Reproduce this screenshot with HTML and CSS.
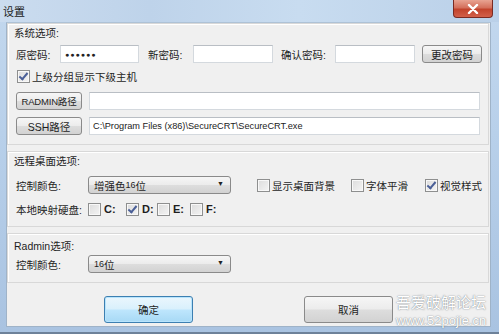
FILE: index.html
```html
<!DOCTYPE html>
<html lang="zh-CN">
<head>
    <meta charset="UTF-8">
    <title>设置</title>
    <link rel="stylesheet" href="styles.css">
</head>
<body>
    <div class="window">
        <div class="titlebar">
            <span class="title">设置</span>
            <button class="close">
                <svg width="12" height="10" viewBox="0 0 12 10"><path d="M2 1 L10 9 M10 1 L2 9" stroke="#fff" stroke-width="2.4" stroke-linecap="round"/></svg>
            </button>
        </div>
        <div class="client">
            <div class="panel sys">
                <div class="caption">系统选项:</div>
                <div class="row">
                    <span class="lbl w44">原密码:</span>
                    <input type="text" class="edit w79 dots" value="●●●●●●">
                    <span class="lbl w45 ml9">新密码:</span>
                    <input type="text" class="edit w80">
                    <span class="lbl w54 ml8">确认密码:</span>
                    <input type="text" class="edit w80">
                    <button class="btn ml7 w60">更改密码</button>
                </div>
                <label class="check row-check"><span class="box on"></span>上级分组显示下级主机</label>
                <div class="row path">
                    <button class="btn w66 small-btn">RADMIN路径</button>
                    <input type="text" class="edit grow">
                </div>
                <div class="row path">
                    <button class="btn w66">SSH路径</button>
                    <input type="text" class="edit grow" value="C:\Program Files (x86)\SecureCRT\SecureCRT.exe">
                </div>
            </div>

            <div class="panel remote">
                <div class="caption">远程桌面选项:</div>
                <div class="row">
                    <span class="lbl w72">控制颜色:</span>
                    <div class="combo">增强色<small>16</small>位<span class="arrow">&#9660;</span></div>
                    <label class="check ml26 w94"><span class="box"></span>显示桌面背景</label>
                    <label class="check w74"><span class="box"></span>字体平滑</label>
                    <label class="check"><span class="box on"></span>视觉样式</label>
                </div>
                <div class="row drives">
                    <span class="lbl w72">本地映射硬盘:</span>
                    <label class="check drive w38"><span class="box"></span>C:</label>
                    <label class="check drive w31"><span class="box on"></span>D:</label>
                    <label class="check drive w33"><span class="box"></span>E:</label>
                    <label class="check drive"><span class="box"></span>F:</label>
                </div>
            </div>

            <div class="panel radmin">
                <div class="caption">Radmin选项:</div>
                <div class="row">
                    <span class="lbl w72">控制颜色:</span>
                    <div class="combo"><small>16</small>位<span class="arrow">&#9660;</span></div>
                </div>
            </div>

            <div class="actions">
                <button class="btn big default">确定</button>
                <button class="btn big">取消</button>
            </div>
        </div>
        <div class="watermark">
            <div class="wm-cn">吾爱破解论坛</div>
            <div class="wm-url">www.52pojie.cn</div>
        </div>
    </div>
</body>
</html>
```

FILE: styles.css
```css
body {
    margin: 0;
    width: 499px;
    height: 334px;
    overflow: hidden;
    background: #3b4d60;
    font-family: "Liberation Sans", "Noto Sans CJK SC", sans-serif;
    font-size: 10.5px;
    color: #1e1e1e;
}

.window {
    position: relative;
    height: 332px;
    display: flex;
    flex-direction: column;
    background: linear-gradient(to bottom, #c3d8ee 0%, #b8d0ea 40%, #a9c3e1 100%);
    box-shadow: 0 2px 0 #6d8199;
}

.titlebar {
    height: 22px;
    flex: none;
    display: flex;
    align-items: flex-start;
    justify-content: space-between;
    background: linear-gradient(to right, #cbdcef 0%, #bed3ea 30%, #c8dcf0 60%, #bad0e8 100%);
}

.title {
    margin: 3px 0 0 3px;
    font-size: 11px;
    color: #1b1b1b;
}

.close {
    width: 40px;
    height: 18px;
    margin-right: 6px;
    padding: 0;
    border: 1px solid #7a2a22;
    border-top: none;
    border-radius: 0 0 4px 4px;
    background: linear-gradient(to bottom, #e8a392 0%, #d4705c 45%, #c2432c 55%, #d2604a 100%);
    display: flex;
    align-items: center;
    justify-content: center;
}

.client {
    flex: 1;
    margin: 0 8px 5px 6px;
    background: #f0f0f0;
    border: 1px solid #9fb3c8;
    border-top-color: #aec2d6;
    display: flex;
    flex-direction: column;
}

.panel {
    flex: none;
    box-sizing: border-box;
    border: 1px solid #d8d8d8;
    box-shadow: inset 1px 1px 0 #ffffff;
    margin: 0 1px 0 0;
    padding: 0 8px;
    display: flex;
    flex-direction: column;
}

.sys {
    height: 122px;
}

.remote {
    margin-top: 6px;
    height: 76px;
}

.radmin {
    margin-top: 6px;
    height: 50px;
}

.caption {
    margin: 2px 0 0 -2px;
    height: 15px;
    line-height: 15px;
}

.row {
    display: flex;
    align-items: center;
    height: 18px;
}

.sys > .row:nth-child(2) {
    margin-top: 4px;
}

.lbl {
    flex: none;
    white-space: nowrap;
}

.w31 { width: 31px; }
.w33 { width: 33px; }
.w38 { width: 38px; }
.w44 { width: 44px; }
.w45 { width: 45px; }
.w54 { width: 54px; }
.w60 { width: 60px; }
.w66 { width: 66px; }
.w72 { width: 72px; }
.w74 { width: 74px; }
.w79 { width: 79px; }
.w80 { width: 80px; }
.w94 { width: 94px; }
.ml7 { margin-left: 7px; }
.ml8 { margin-left: 8px; }
.ml9 { margin-left: 9px; }
.ml26 { margin-left: 26px; }

.edit {
    flex: none;
    box-sizing: border-box;
    height: 18px;
    margin: 0;
    padding: 0 3px;
    border: 1px solid #d4d9de;
    border-top-color: #b9bec4;
    background: #fff;
    font-family: "Liberation Sans", "Noto Sans CJK SC", sans-serif;
    font-size: 9.2px;
    color: #222;
    outline: none;
}

.dots {
    font-size: 7px;
    letter-spacing: 1px;
    padding-left: 4px;
}

.grow {
    flex: 1;
    margin-left: 7px;
}

.btn {
    flex: none;
    box-sizing: border-box;
    height: 18px;
    padding: 0;
    border: 1px solid #8a8a8a;
    border-radius: 3px;
    background: linear-gradient(to bottom, #f6f6f6 0%, #ececec 48%, #dddddd 52%, #d2d2d2 100%);
    font-family: "Liberation Sans", "Noto Sans CJK SC", sans-serif;
    font-size: 10.5px;
    color: #1e1e1e;
    white-space: nowrap;
}

.small-btn {
    font-size: 9.5px;
    letter-spacing: -0.2px;
}

.check {
    flex: none;
    display: flex;
    align-items: center;
    white-space: nowrap;
}

.row-check {
    height: 14px;
    margin: 6px 0 0 1px;
}

.path {
    margin-top: 9px;
}

.path + .path {
    margin-top: 7px;
}

.box {
    flex: none;
    box-sizing: border-box;
    width: 13px;
    height: 13px;
    margin-right: 2px;
    border: 1px solid #8e8f8f;
    background: linear-gradient(135deg, #dcdcdc 0%, #f4f4f4 100%);
    box-shadow: inset 0 0 0 1px #f8f8f8;
    position: relative;
}

.box.on::after {
    content: "";
    position: absolute;
    left: 3px;
    top: 0px;
    width: 3px;
    height: 7px;
    border: solid #4a5f97;
    border-width: 0 2px 2px 0;
    transform: rotate(40deg);
}

.remote .row:nth-child(2) {
    margin-top: 7px;
}

.combo {
    flex: none;
    box-sizing: border-box;
    width: 143px;
    height: 18px;
    padding: 0 5px;
    border: 1px solid #8a8a8a;
    border-radius: 3px;
    background: linear-gradient(to bottom, #f6f6f6 0%, #ececec 48%, #dddddd 52%, #d2d2d2 100%);
    display: flex;
    align-items: center;
    position: relative;
}

.combo small {
    font-size: 9px;
}

.arrow {
    position: absolute;
    right: 6px;
    top: 3px;
    font-size: 7px;
    color: #222;
}

.drives {
    margin-top: 6px;
}

.drive {
    font-weight: bold;
    font-size: 11px;
}

.drive .box {
    margin-right: 3px;
}

.radmin .caption {
    margin-top: 5px;
}

.radmin .row {
    margin-top: 1px;
}

.actions {
    display: flex;
    padding: 13px 0 0 97px;
    gap: 111px;
}

.big {
    width: 89px;
    height: 27px;
}

.default {
    border-color: #3c7fb1;
    background: linear-gradient(to bottom, #eaf6fd 0%, #d9f0fc 48%, #bee6fd 52%, #a7d9f5 100%);
    box-shadow: inset 0 0 0 1px #b8e4fc;
}

.watermark {
    position: absolute;
    left: 396px;
    top: 293px;
    color: #ffffff;
    text-shadow: 0 0 1px rgba(80, 90, 100, 0.7), 0 0 2px rgba(80, 90, 100, 0.4);
}

.wm-cn {
    font-family: "Noto Sans CJK SC", sans-serif;
    font-size: 15px;
    height: 17px;
    line-height: 17px;
}

.wm-url {
    margin-top: 4px;
    font-size: 13px;
    height: 14px;
    line-height: 14px;
}
```
